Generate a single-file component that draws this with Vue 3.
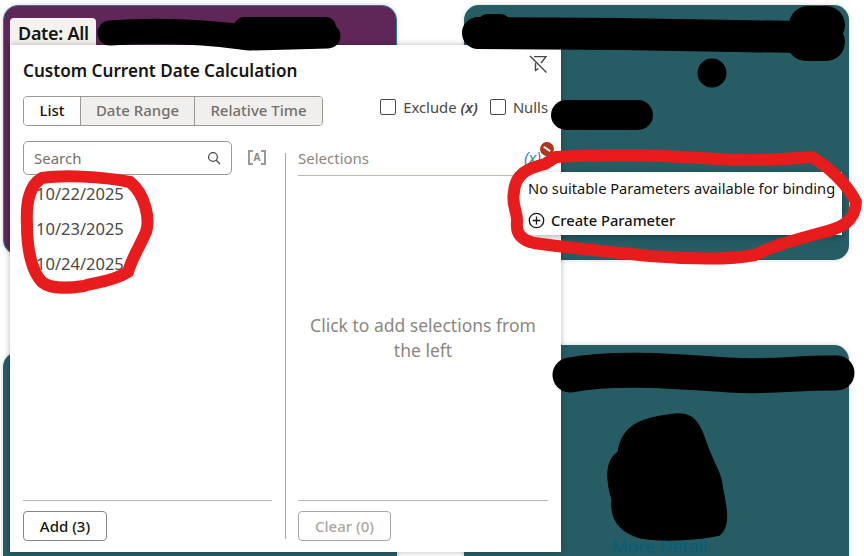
<template>
  <div class="page">
    <div class="col col-left">
      <div class="card card-purple">
        <div class="date-tab">Date: All</div>
      </div>
      <div class="card card-teal card-bottom-left"></div>
    </div>
    <div class="col col-right">
      <div class="card card-teal card-top-right"></div>
      <div class="card card-teal card-bottom-right">
        <a class="more-link">More Detail</a>
      </div>
    </div>

    <div class="filter-popup">
      <div class="popup-head">
        <div class="popup-title">Custom Current Date Calculation</div>
        <svg class="filter-off" width="18" height="18" viewBox="0 0 18 18" fill="none" stroke="#4a4845" stroke-width="1.4">
          <path d="M1 1 L17.5 17.5" />
          <path d="M5 1.6 H17 L12 8" />
          <path d="M6.5 8 V15.5 L9.5 13.5" />
        </svg>
      </div>

      <div class="toolbar">
        <div class="segments">
          <div class="segment active seg-list">List</div>
          <div class="segment seg-range">Date Range</div>
          <div class="segment seg-time">Relative Time</div>
        </div>
        <div class="checks">
          <label class="check"><span class="box"></span>Exclude <i class="var-x">(x)</i></label>
          <label class="check"><span class="box"></span>Nulls</label>
        </div>
      </div>

      <div class="body">
        <div class="pane pane-left">
          <div class="search-row">
            <div class="search-box">
              <span>Search</span>
              <svg width="14" height="14" viewBox="0 0 14 14" fill="none" stroke="#4a4845" stroke-width="1.3">
                <circle cx="6" cy="6" r="4.4" />
                <path d="M9.3 9.3 L13 13" />
              </svg>
            </div>
            <div class="case-btn"><span class="case-a">A</span></div>
          </div>
          <div class="date-list">
            <div v-for="date in dates" :key="date" class="date-item">{{ date }}</div>
          </div>
          <div class="pane-foot">
            <button class="btn" type="button">Add (3)</button>
          </div>
        </div>

        <div class="divider"></div>

        <div class="pane pane-right">
          <div class="selections-head">
            <span>Selections</span>
            <span class="bind-x">(x)</span>
          </div>
          <div class="empty-hint">Click to add selections from the left</div>
          <div class="pane-foot">
            <button class="btn btn-disabled" type="button">Clear (0)</button>
          </div>
        </div>
      </div>
    </div>

    <div class="bind-popover">
      <div class="pop-msg">No suitable Parameters available for binding</div>
      <div class="pop-action">
        <svg width="17" height="17" viewBox="0 0 17 17" fill="none" stroke="#161513" stroke-width="1.3">
          <circle cx="8.5" cy="8.5" r="7.2" />
          <path d="M8.5 4.6 V12.4 M4.6 8.5 H12.4" />
        </svg>
        <span>Create Parameter</span>
      </div>
    </div>

    <!-- hand drawn marks on top of the screenshot -->
    <svg class="marks" width="864" height="556" viewBox="0 0 864 556" fill="none">
      <g stroke="#e81c1c" stroke-width="12" stroke-linecap="round" stroke-linejoin="round">
        <path d="M42 178 C62 175 100 176 130 182 C146 195 150 220 146 232 C138 250 132 258 128 272 C112 282 92 283 84 286 C70 288 52 290 42 282 C32 272 27 250 27 225 C26 205 28 186 42 178 Z" />
        <path d="M556 157 C600 154 660 155 700 158 C740 161 780 160 812 157 C830 168 848 185 856 202 C855 222 842 228 820 233 C795 240 775 245 755 255 C730 260 690 259 650 256 C610 252 570 248 534 243 C520 240 516 232 517 222 C518 212 511 205 514 192 C515 174 528 168 545 164 Z" />
      </g>
      <g fill="#000" stroke="#000" stroke-linecap="round" stroke-linejoin="round">
        <path d="M110 33 C150 30 200 31 250 38 L328 36" stroke-width="25" />
        <path d="M244 27 H326" stroke-width="20" />
        <path d="M478 33 L620 34 L800 37" stroke-width="32" />
        <path d="M488 25 L500 25" stroke-width="22" />
        <path d="M808 25 H826 M806 42 H826" stroke-width="38" />
        <circle cx="712" cy="73" r="14.5" stroke="none" />
        <path d="M566 115 H638" stroke-width="30" />
        <path d="M570 375 C620 366 680 372 730 375 C770 378 800 372 837 373" stroke-width="35" />
        <path d="M618 452 C622 425 640 418 675 414 C695 412 700 425 706 442 C712 460 722 475 722 485 C727 510 730 525 720 535 C700 540 660 542 640 538 C620 532 610 520 612 500 C606 480 605 460 618 452 Z" stroke-width="1" />
      </g>
    </svg>
  </div>
</template>

<script setup>
const dates = ['10/22/2025', '10/23/2025', '10/24/2025']
</script>

<style scoped>
.page {
  position: relative;
  display: flex;
  width: 864px;
  height: 556px;
  overflow: hidden;
  background: #fff;
  font-family: "Noto Sans", "Open Sans", sans-serif;
  color: #161513;
}

.col {
  display: flex;
  flex-direction: column;
}

.col-left {
  width: 394px;
  margin-left: 3px;
}

.col-right {
  width: 385px;
  margin-left: 67px;
}

.card {
  flex-shrink: 0;
  box-sizing: border-box;
  border-radius: 15px;
  box-shadow: 0 0 5px rgba(0, 0, 0, 0.18);
}

.card-purple {
  height: 250px;
  margin-top: 5px;
  padding: 12px 0 0 6px;
  background: #5f2658;
  border: 1px solid #2b7a94;
}

.card-teal {
  background: #265c63;
}

.card-bottom-left {
  height: 230px;
  margin-top: 97px;
}

.card-top-right {
  height: 255px;
  margin-top: 5px;
}

.card-bottom-right {
  display: flex;
  justify-content: center;
  height: 230px;
  margin-top: 85px;
  padding: 191px 0 0 6px;
}

.date-tab {
  display: inline-block;
  width: 86px;
  height: 27px;
  box-sizing: border-box;
  padding-left: 8px;
  background: #f4f2ef;
  border-radius: 4px 4px 0 0;
  font-size: 18px;
  font-weight: 600;
  line-height: 30px;
  letter-spacing: -0.3px;
}

.more-link {
  font-size: 17.5px;
  line-height: 20px;
  color: #04607f;
}

.filter-popup {
  position: absolute;
  left: 10px;
  top: 45px;
  display: flex;
  flex-direction: column;
  box-sizing: border-box;
  width: 551px;
  height: 507px;
  padding: 14px 13px 11px;
  background: #fff;
  box-shadow: 0 0 6px rgba(0, 0, 0, 0.28);
}

.popup-head {
  display: flex;
  justify-content: space-between;
  align-items: flex-start;
  height: 24px;
}

.popup-title {
  font-size: 17.1px;
  font-weight: 600;
  line-height: 24px;
}

.filter-off {
  margin: -4px 1px 0 0;
}

.toolbar {
  display: flex;
  justify-content: space-between;
  margin-top: 13px;
  height: 30px;
}

.segments {
  display: flex;
  box-sizing: border-box;
  width: 300px;
  height: 30px;
  border: 1px solid #9e9892;
  border-radius: 4px;
  overflow: hidden;
  font-size: 15px;
  font-weight: 500;
}

.segment {
  display: flex;
  align-items: center;
  justify-content: center;
  padding-bottom: 2px;
  background: #f1efed;
  color: #74706b;
  border-left: 1px solid #9e9892;
}

.segment.active {
  background: #fff;
  color: #161513;
  border-left: none;
}

.seg-list {
  width: 56px;
}

.seg-range {
  width: 113px;
}

.seg-time {
  flex: 1;
}

.checks {
  display: flex;
  gap: 12px;
  font-size: 14.8px;
  color: #4a4845;
}

.check {
  display: flex;
  align-items: center;
  height: 22px;
  gap: 7px;
}

.box {
  width: 16px;
  height: 16px;
  box-sizing: border-box;
  border: 1.5px solid #4a4845;
  border-radius: 2px;
}

.var-x {
  margin-left: -3px;
  font-size: 15px;
  font-weight: 600;
}

.body {
  display: flex;
  flex: 1;
  margin-top: 15px;
  min-height: 0;
}

.pane {
  display: flex;
  flex-direction: column;
}

.pane-left {
  width: 249px;
}

.pane-right {
  width: 250px;
}

.divider {
  width: 1px;
  margin: 12px 12px 2px 13px;
  background: #aaa6a1;
}

.search-row {
  display: flex;
  align-items: flex-start;
  height: 35px;
}

.search-box {
  display: flex;
  align-items: center;
  justify-content: space-between;
  box-sizing: border-box;
  width: 209px;
  height: 34px;
  padding: 0 10px;
  border: 1px solid #9e9892;
  border-radius: 5px;
  font-size: 15px;
  color: #74706b;
}

.case-btn {
  position: relative;
  box-sizing: border-box;
  width: 18px;
  height: 15px;
  margin: 9px 0 0 16px;
  border-left: 2px solid #9e9892;
  border-right: 2px solid #9e9892;
  text-align: center;
}

.case-btn::before,
.case-btn::after {
  content: "";
  position: absolute;
  width: 16px;
  height: 2px;
  left: -1px;
  background: linear-gradient(90deg, #9e9892 4px, transparent 4px, transparent 12px, #9e9892 12px);
}

.case-btn::before {
  top: 0;
}

.case-btn::after {
  bottom: 0;
}

.case-a {
  display: block;
  font-size: 10px;
  font-weight: 700;
  line-height: 15px;
  color: #8b8681;
}

.date-list {
  flex: 1;
  padding-left: 13px;
}

.date-item {
  height: 35px;
  font-size: 16.5px;
  line-height: 35px;
  color: #4a4845;
}

.pane-foot {
  height: 41px;
  box-sizing: border-box;
  padding-top: 10px;
  border-top: 1px solid #bdb7b1;
}

.btn {
  height: 30px;
  padding: 0;
  background: #fff;
  border: 1px solid #8b8681;
  border-radius: 4px;
  font-family: inherit;
  font-size: 15px;
  font-weight: 500;
  color: #161513;
}

.pane-left .btn {
  width: 84px;
}

.btn-disabled {
  width: 93px;
  border-color: #aaa6a1;
  color: #aaa6a1;
}

.selections-head {
  display: flex;
  justify-content: space-between;
  align-items: center;
  box-sizing: border-box;
  height: 35px;
  border-bottom: 1px solid #bdb7b1;
  font-size: 15px;
  color: #8b8681;
}

.bind-x {
  position: relative;
  margin-right: 7px;
  font-style: italic;
  font-size: 16px;
  color: #2f8bb0;
}

.bind-x::after {
  content: "";
  position: absolute;
  top: -5px;
  right: -13px;
  width: 14px;
  height: 14px;
  border-radius: 50%;
  background: linear-gradient(#fff, #fff) center / 8px 2px no-repeat #b5321f;
  transform: rotate(35deg);
}

.empty-hint {
  display: flex;
  flex: 1;
  align-items: center;
  justify-content: center;
  text-align: center;
  font-size: 17.5px;
  line-height: 25px;
  color: #8b8681;
}

.bind-popover {
  position: absolute;
  left: 518px;
  top: 172px;
  box-sizing: border-box;
  width: 324px;
  height: 63px;
  padding: 4px 0 0 10px;
  background: #fff;
  box-shadow: 0 2px 6px rgba(0, 0, 0, 0.3);
  font-size: 14.7px;
}

.pop-msg {
  line-height: 24px;
}

.pop-action {
  display: flex;
  align-items: center;
  gap: 6px;
  margin-top: 8px;
  line-height: 24px;
  font-weight: 500;
}

.marks {
  position: absolute;
  left: 0;
  top: 0;
  pointer-events: none;
}
</style>
